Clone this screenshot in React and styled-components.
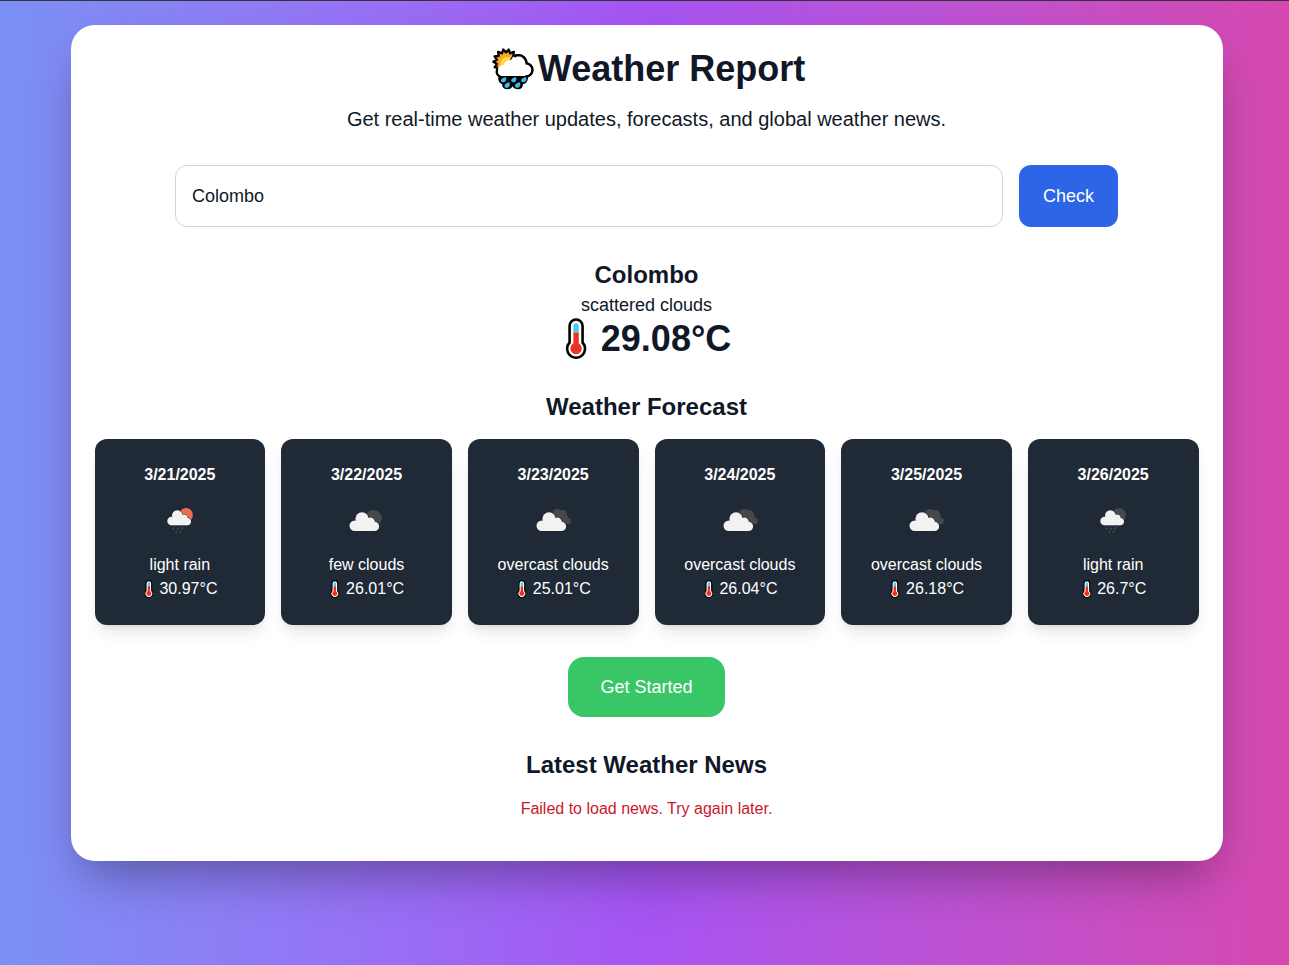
import React from "react";
import styled, { createGlobalStyle } from "styled-components";

const GlobalStyle = createGlobalStyle`
  *, *::before, *::after { box-sizing: border-box; }
  body { margin: 0; font-family: "Liberation Sans", Arial, sans-serif; font-size: 16px; line-height: 24px; color: #101828; }
  h1, h2, p { margin: 0; }
  button, input { font: inherit; color: inherit; }
`;

const Page = styled.div`
  min-height: 965px;
  padding: 24px 66.500px 24px 70.500px;
  border-top: 1px solid #333338;
  background: linear-gradient(to right in oklab, #7a90f6 0%, #a654f3 50%, #d548b0 100%);
`;

const Panel = styled.main`
  display: flex;
  flex-direction: column;
  align-items: center;
  gap: 32px;
  padding: 24px 24px 40px;
  border-radius: 24px;
  background: #fff;
  box-shadow: 0 25px 50px -12px rgba(0, 0, 0, 0.35);
`;

const Header = styled.header`
  text-align: center;
`;

const Title = styled.h1`
  display: flex;
  justify-content: center;
  align-items: center;
  height: 40px;
  margin-bottom: 16px;
  font-size: 36px;
  line-height: 40px;
`;

const Tagline = styled.p`
  font-size: 20px;
  line-height: 28px;
`;

const SearchForm = styled.form`
  display: flex;
  gap: 16px;
  width: 943px;
`;

const CityInput = styled.input`
  flex: 1;
  min-width: 0;
  padding: 16px;
  border: 1px solid #d1d5dc;
  border-radius: 12px;
  background: #fff;
  font-size: 18px;
  line-height: 28px;
  outline: none;
`;

const Button = styled.button`
  border: 0;
  padding: 16px ${(p) => (p.$large ? "32px" : "24px")};
  border-radius: ${(p) => (p.$large ? "16px" : "12px")};
  background: ${(p) => (p.$large ? "#39c666" : "#2d65e7")};
  color: #fff;
  font-size: 18px;
  line-height: 28px;
`;

const Current = styled.section`
  text-align: center;
`;

const Heading = styled.h2`
  font-size: 24px;
  line-height: 32px;
  text-align: center;
`;

const Condition = styled.p`
  font-size: 18px;
  line-height: 28px;
`;

const Temperature = styled.p`
  display: flex;
  justify-content: center;
  align-items: center;
  gap: ${(p) => (p.$large ? "13.5px" : "6px")};
  padding-left: ${(p) => (p.$large ? "3.5px" : "1.5px")};
  height: ${(p) => (p.$large ? "40px" : "24px")};
  font-size: ${(p) => (p.$large ? "36px" : "16px")};
  line-height: ${(p) => (p.$large ? "40px" : "24px")};
  font-weight: ${(p) => (p.$large ? 700 : 400)};

  svg { margin-bottom: ${(p) => (p.$large ? "2px" : "1px")}; }
`;

const Section = styled.section`
  display: flex;
  flex-direction: column;
  gap: 16px;
  width: 100%;
`;

const Grid = styled.div`
  display: grid;
  grid-template-columns: repeat(6, 1fr);
  gap: 16px;
`;

const DayCard = styled.article`
  padding: 24px 0;
  border-radius: 12px;
  background: #202a36;
  color: #fff;
  text-align: center;
  box-shadow: 0 10px 15px -3px rgba(0, 0, 0, 0.1), 0 4px 6px -4px rgba(0, 0, 0, 0.1);
`;

const DayDate = styled.p`
  font-weight: 700;
`;

const DayIcon = styled.svg`
  display: block;
  width: 50px;
  height: 50px;
  margin: 8px auto;
`;

const ErrorText = styled.p`
  color: #c9182c;
  text-align: center;
`;

const TitleIcon = styled.svg`
  width: 42px;
  height: 42px;
  margin: 0 4px 0 4px;
  overflow: visible;
`;

const sunRays = Array.from({ length: 28 }, (_, i) => {
  const radius = i % 2 ? 9.4 : 12.6;
  const angle = (i * Math.PI) / 14;
  return `${(14 + radius * Math.cos(angle)).toFixed(2)},${(13.8 + radius * Math.sin(angle)).toFixed(2)}`;
}).join(" ");

const cloudTop =
  "M19 12C20.500 8.800 23.500 7 26.500 7.100C31 7.200 34.300 11 34.500 15.300C38 16 40.400 18.500 40.400 22C40.400 25.500 37.500 28.300 34 28.500";

function SunRainIcon() {
  return (
    <TitleIcon viewBox="0 0 42 42">
      <polygon points={sunRays} fill="#f9a825" stroke="#000" strokeWidth="2.300" strokeLinejoin="round" />
      <circle cx="15" cy="15.500" r="6.500" fill="#ffdb45" />
      <path d={cloudTop} fill="none" stroke="#000" strokeWidth="2.300" />
      <path
        d="M8 28.500C5 27.500 4 25 4.800 22C5.500 18.500 8.500 17 11.500 17.200C12.500 14 15.500 12 19 12C20.500 8.800 23.500 7 26.500 7.100C31 7.200 34.300 11 34.500 15.300C38 16 40.400 18.500 40.400 22C40.400 25.500 37.500 28.300 34 28.500Z"
        fill="#fff"
      />
      <path
        d="M23 8.200C24 7.500 25.300 7.100 26.500 7.100C31 7.200 34.300 11 34.500 15.300C38 16 40.400 18.500 40.400 22C40.400 25.500 37.500 28.300 34 28.500"
        fill="none" stroke="#000" strokeWidth="2.300" strokeLinecap="round"
      />
      <path d="M5.200 21C4 24.500 5 27.500 8 28.500" fill="none" stroke="#000" strokeWidth="2.300" strokeLinecap="round" />
      <path
        d="M6.500 28h29.500v2.500c-.5 3.500-2.500 5.500-5 5.500 0 3.500-2 5.300-5 5.300-2.500 0-4.500-1-5.500-3-1 2-2.500 3-5 3-3.500 0-5.500-2-5.300-5-3.500-1-4.500-4.500-3.700-8.300z"
        fill="#000"
      />
      <g fill="#3bbdf0">
        <path d="M14 29.300c.8 3-.8 5-3 5-3.200 0-3-4.500 3-5z" />
        <path d="M24.200 29.300c.8 3-.8 5-3 5-3.200 0-3-4.500 3-5z" />
        <path d="M34.200 29.300c.8 3-.8 5-3 5-3.200 0-3-4.500 3-5z" />
        <path d="M17.500 34.300c1 3.500-.8 5.500-3 5.500-3.200 0-3-4.700 3-5.500z" />
        <path d="M28 34.300c1 3.500-.8 5.500-3 5.500-3.200 0-3-4.700 3-5.500z" />
      </g>
    </TitleIcon>
  );
}

function Thermometer({ size }) {
  return (
    <svg width={size / 1.85} height={size} viewBox="0 0 22 41">
      <path
        d="M4.500 8a6.500 6.500 0 0 1 13 0v16.500a9 9 0 1 1-13 0z"
        fill="#fff" stroke="#000" strokeWidth="2.600"
      />
      <path d="M8.300 14.500V8a2.700 2.700 0 0 1 5.400 0v6.500z" fill="#46cdf5" />
      <path d="M8.300 14.500h5.400v11a5.700 5.700 0 1 1-5.400 0z" fill="#ed3424" />
    </svg>
  );
}

function CloudLobes() {
  return (
    <>
      <circle cx="13.800" cy="30.700" r="5.300" />
      <circle cx="21" cy="23.800" r="6.600" />
      <circle cx="29.300" cy="27.200" r="4.600" />
      <circle cx="33.500" cy="31.400" r="4.600" />
      <path d="M13.800 27h19.700v9h-19.700z" />
    </>
  );
}

function Cloud({ transform }) {
  return (
    <g transform={transform}>
      <g fill="#202a36" stroke="#202a36" strokeWidth="1.400"><CloudLobes /></g>
      <g fill="#f2f2f2"><CloudLobes /></g>
    </g>
  );
}

function ForecastIcon({ type }) {
  if (type === "rain-day" || type === "rain-night") {
    return (
      <DayIcon viewBox="0 0 50 50">
        <circle cx="31" cy="20" r="6.900" fill={type === "rain-day" ? "#ec6e4c" : "#48484a"} />
        <Cloud transform="translate(5.500 1.500) scale(.8)" />
        <path
          d="M18.800 33l-.5 1.200M23.300 33l-.5 1.200M27.800 32.500l-.6 1.300M21.500 36.500l-.5 1M25.800 36l-.6 1.300"
          stroke="#57595d" strokeWidth="1.100" strokeLinecap="round"
        />
      </DayIcon>
    );
  }
  return (
    <DayIcon viewBox="0 0 50 50">
      {type === "few" ? (
        <circle cx="32.400" cy="23.300" r="8.300" fill="#48484a" />
      ) : (
        <g fill="#48484a">
          <circle cx="29" cy="19" r="5" />
          <circle cx="34.500" cy="19.300" r="4.300" />
          <circle cx="36" cy="23" r="4" />
          <circle cx="39.500" cy="26" r="3.300" />
          <path d="M27 20l8-2 5 11-6 1z" />
        </g>
      )}
      <Cloud />
    </DayIcon>
  );
}

const forecast = [
  { date: "3/21/2025", type: "rain-day", text: "light rain", temp: "30.97°C" },
  { date: "3/22/2025", type: "few", text: "few clouds", temp: "26.01°C" },
  { date: "3/23/2025", type: "overcast", text: "overcast clouds", temp: "25.01°C" },
  { date: "3/24/2025", type: "overcast", text: "overcast clouds", temp: "26.04°C" },
  { date: "3/25/2025", type: "overcast", text: "overcast clouds", temp: "26.18°C" },
  { date: "3/26/2025", type: "rain-night", text: "light rain", temp: "26.7°C" },
];

export default function App() {
  return (
    <>
      <GlobalStyle />
      <Page>
        <Panel>
          <Header>
            <Title><SunRainIcon />Weather Report</Title>
            <Tagline>Get real-time weather updates, forecasts, and global weather news.</Tagline>
          </Header>
          <SearchForm onSubmit={(e) => e.preventDefault()}>
            <CityInput defaultValue="Colombo" />
            <Button>Check</Button>
          </SearchForm>
          <Current>
            <Heading>Colombo</Heading>
            <Condition>scattered clouds</Condition>
            <Temperature $large><Thermometer size={41} />29.08°C</Temperature>
          </Current>
          <Section>
            <Heading>Weather Forecast</Heading>
            <Grid>
              {forecast.map((day) => (
                <DayCard key={day.date}>
                  <DayDate>{day.date}</DayDate>
                  <ForecastIcon type={day.type} />
                  <p>{day.text}</p>
                  <Temperature><Thermometer size={18} />{day.temp}</Temperature>
                </DayCard>
              ))}
            </Grid>
          </Section>
          <Button $large>Get Started</Button>
          <Section>
            <Heading>Latest Weather News</Heading>
            <ErrorText>Failed to load news. Try again later.</ErrorText>
          </Section>
        </Panel>
      </Page>
    </>
  );
}
